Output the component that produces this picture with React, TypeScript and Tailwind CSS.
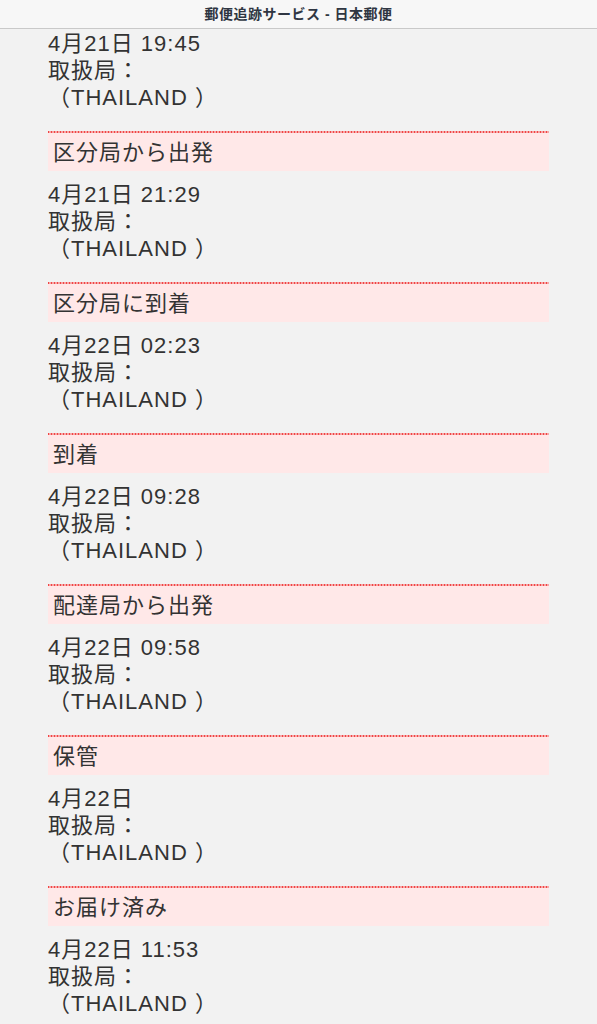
const font = {
  fontFamily: '"Liberation Sans", "Noto Sans CJK JP", sans-serif',
};

type Entry = { status?: string; date: string };

const entries: Entry[] = [
  { date: "4月21日 19:45" },
  { status: "区分局から出発", date: "4月21日 21:29" },
  { status: "区分局に到着", date: "4月22日 02:23" },
  { status: "到着", date: "4月22日 09:28" },
  { status: "配達局から出発", date: "4月22日 09:58" },
  { status: "保管", date: "4月22日" },
  { status: "お届け済み", date: "4月22日 11:53" },
];

const Section = ({ entry }: { entry: Entry }) => {
  return (
    <div>
      {entry.status && (
        <div className="bg-[#ffe8e8]">
          {/* dotted red rule on top of the status band */}
          <div className="h-[2px] bg-[linear-gradient(to_right,#f04545_50%,#f7a5a5_50%)] bg-[length:3px_2px]"></div>
          <div className="h-[38px] pl-[5px] flex items-center">{entry.status}</div>
        </div>
      )}
      <div className={entry.status ? "mt-[10px] mb-[20px]" : "pt-px mb-[20px]"}>
        <div>{entry.date}</div>
        <div>取扱局：</div>
        <div>（THAILAND ）</div>
      </div>
    </div>
  );
};

export default function App() {
  return (
    <div className="w-[597px] h-[1024px] overflow-hidden bg-[#f2f2f2]" style={font}>
      <div className="h-[29px] bg-[#f7f7f7] border-b border-[#c9c9c9] flex items-center justify-center">
        <span className="text-[14px] font-semibold text-[#2f3642] tracking-[0.5px]">
          郵便追跡サービス - 日本郵便
        </span>
      </div>
      <div className="ml-[48px] w-[501px] text-[22px] leading-[27px] tracking-[1px] text-[#333]">
        {entries.map((e, i) => (
          <Section key={i} entry={e} />
        ))}
      </div>
    </div>
  );
}
